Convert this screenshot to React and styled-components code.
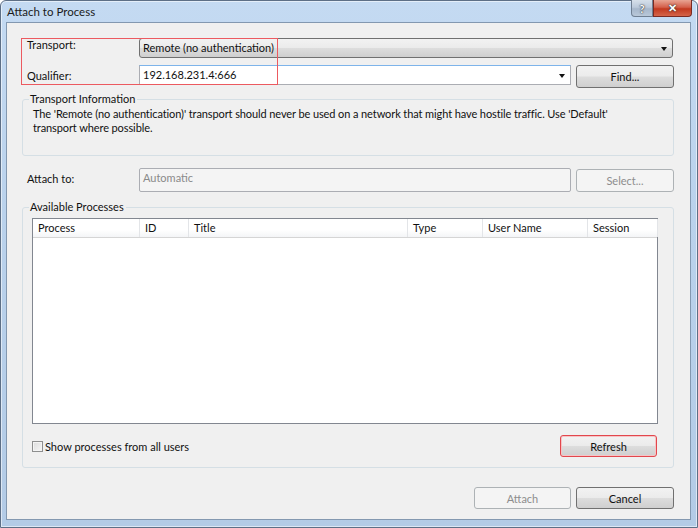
import React from "react";
import styled, { createGlobalStyle, css } from "styled-components";

const GlobalStyle = createGlobalStyle`
  html, body { margin: 0; padding: 0; background: #fff; }
  body { font-family: "Lato", "Noto Sans", sans-serif; font-size: 11px; color: #111; }
  * { box-sizing: border-box; }
`;

const columns = [
  { name: "Process", width: 107 },
  { name: "ID", width: 49 },
  { name: "Title", width: 219 },
  { name: "Type", width: 75 },
  { name: "User Name", width: 105 },
  { name: "Session", width: 70 },
];

const Window = styled.div`
  width: 698px;
  height: 528px;
  display: flex;
  flex-direction: column;
  padding: 0 6px 7px 5px;
  border: 1px solid #5d6f86;
  border-radius: 6px 6px 0 0;
  background: linear-gradient(180deg, #c4daf2 0%, #bad2ec 40%, #b3cbe6 100%);
  box-shadow: inset 0 0 0 1px rgba(255, 255, 255, 0.55);
`;

const TitleBar = styled.div`
  height: 21px;
  display: flex;
  align-items: flex-start;
  margin-right: -1px;
`;

const Title = styled.div`
  padding: 4px 0 0 1px;
  font-size: 11.5px;
  color: #1a1a1a;
`;

const CaptionButtons = styled.div`
  margin-left: auto;
  display: flex;
  margin-top: -1px;
`;

const CaptionButton = styled.div`
  height: 17px;
  width: ${(p) => (p.$close ? "39px" : "22px")};
  display: flex;
  align-items: center;
  justify-content: center;
  border: 1px solid ${(p) => (p.$close ? "#7a2a22" : "#6f7f92")};
  border-top: none;
  color: #fff;
  font-weight: bold;
  font-size: 11px;
  background: ${(p) =>
    p.$close
      ? "linear-gradient(180deg, #e8a493 0%, #d4604b 45%, #c2391f 55%, #d4654a 100%)"
      : "linear-gradient(180deg, #d6e0ea 0%, #bccadb 45%, #a6b7cb 55%, #b9c8d9 100%)"};
  border-radius: ${(p) => (p.$close ? "0 0 4px 0" : "0 0 0 4px")};
  text-shadow: 0 0 1px #222, 0 0 2px #333;
`;

const Client = styled.div`
  position: relative;
  flex: 1;
  background: #f0f0f0;
  border: 1px solid #8398b0;
  padding: 15px 16px 0 15px;
  display: flex;
  flex-direction: column;
`;

const Annotation = styled.div`
  position: absolute;
  z-index: 2;
  left: 14px;
  top: 15px;
  width: 257px;
  height: 47px;
  border: 1px solid #ec5a60;
  pointer-events: none;
`;

const FormGrid = styled.div`
  display: grid;
  grid-template-columns: 112px 432px 98px;
  column-gap: 5px;
  align-items: start;
  margin-top: ${(p) => p.$top || 0}px;
`;

const Label = styled.div`
  padding-left: 5px;
  line-height: ${(p) => p.$h || 20}px;
  margin-top: ${(p) => p.$mt || 0}px;
`;

const arrow = css`
  &::after {
    content: "";
    position: absolute;
    right: 5px;
    top: 50%;
    margin-top: -1px;
    border-left: 3px solid transparent;
    border-right: 3px solid transparent;
    border-top: 4px solid #111;
  }
`;

const DropDown = styled.div`
  position: relative;
  grid-column: 2 / 4;
  height: 20px;
  margin-right: 1px;
  border: 1px solid #707070;
  border-radius: 3px;
  background: linear-gradient(180deg, #f2f2f2 0%, #ebebeb 49%, #dddddd 51%, #cfcfcf 100%);
  padding-left: 3px;
  line-height: 18px;
  ${arrow}
`;

const ComboEdit = styled.div`
  position: relative;
  height: 20px;
  border: 1px solid #abadb3;
  border-top-color: #7eb4ea;
  background: #fff;
  padding-left: 3px;
  line-height: 18px;
  ${arrow}
`;

const TextBox = styled.div`
  height: 24px;
  border: 1px solid #abadb3;
  border-radius: 2px;
  background: #f4f4f4;
  color: #8a8a8a;
  padding: 2px 3px;
`;

const Button = styled.div`
  height: ${(p) => p.$h || 22}px;
  width: ${(p) => (p.$w ? `${p.$w}px` : "auto")};
  margin-top: ${(p) => p.$mt || 0}px;
  margin-left: ${(p) => (p.$push ? "auto" : "0")};
  display: flex;
  align-items: center;
  justify-content: center;
  border: 1px solid ${(p) => (p.$disabled ? "#adb2b5" : p.$highlight ? "#e2474d" : "#707070")};
  border-radius: 3px;
  color: ${(p) => (p.$disabled ? "#8d8d8d" : "#111")};
  background: ${(p) =>
    p.$disabled
      ? "#f4f4f4"
      : "linear-gradient(180deg, #f2f2f2 0%, #ebebeb 49%, #dddddd 51%, #cfcfcf 100%)"};
  ${(p) => p.$highlight && "box-shadow: inset 0 0 0 1px #f6c4c6;"}
`;

const Group = styled.fieldset`
  margin: ${(p) => p.$mt || 0}px 0 0 0;
  padding: ${(p) => p.$pad};
  border: 1px solid #d5dfe5;
  border-radius: 3px;
  min-width: 0;
  height: ${(p) => p.$h}px;
`;

const Legend = styled.legend`
  padding: 0 2px 0 1px;
  margin-left: ${(p) => p.$ml}px;
  line-height: 14px;
`;

const InfoText = styled.p`
  margin: 0;
  max-width: 600px;
  line-height: 14px;
  letter-spacing: -0.1px;
`;

const ListView = styled.div`
  height: 206px;
  background: #fff;
  border: 1px solid #828790;
`;

const HeaderRow = styled.div`
  display: flex;
  height: 19px;
  background: linear-gradient(180deg, #ffffff 0%, #ffffff 60%, #f4f5f7 100%);
  border-bottom: 1px solid #d5d5d5;
`;

const HeaderCell = styled.div`
  width: ${(p) => p.$w}px;
  flex: none;
  padding-left: 5px;
  line-height: 18px;
  border-right: 1px solid #e3e5e8;
`;

const CheckRow = styled.div`
  display: flex;
  align-items: center;
  margin-top: 11px;
  padding-right: 1px;
`;

const CheckBox = styled.span`
  width: 11px;
  height: 11px;
  border: 1px solid #8e8f8f;
  background: linear-gradient(135deg, #dcdcdc 0%, #f6f6f6 100%);
  box-shadow: inset 0 0 0 1px #f4f4f4;
  margin-right: 2px;
`;

const Footer = styled.div`
  display: flex;
  justify-content: flex-end;
  gap: 5px;
  margin-top: 19px;
`;

const App = () => {
  return (
    <>
      <GlobalStyle />
      <Window>
        <TitleBar>
          <Title>Attach to Process</Title>
          <CaptionButtons>
            <CaptionButton>?</CaptionButton>
            <CaptionButton $close>✕</CaptionButton>
          </CaptionButtons>
        </TitleBar>
        <Client>
          <Annotation />
          <FormGrid>
            <Label $mt={-3}>Transport:</Label>
            <DropDown>Remote (no authentication)</DropDown>
          </FormGrid>
          <FormGrid $top={7}>
            <Label $mt={1}>Qualifier:</Label>
            <ComboEdit>192.168.231.4:666</ComboEdit>
            <Button $h={23}>Find...</Button>
          </FormGrid>

          <Group $mt={4} $h={64} $pad="1px 10px 0 10px">
            <Legend $ml={-4}>Transport Information</Legend>
            <InfoText>
              The 'Remote (no authentication)' transport should never be used on a network that might have hostile traffic. Use 'Default'
              transport where possible.
            </InfoText>
          </Group>

          <FormGrid $top={12}>
            <Label $h={22}>Attach to:</Label>
            <TextBox>Automatic</TextBox>
            <Button $disabled $h={23} $mt={1}>Select...</Button>
          </FormGrid>

          <Group $mt={8} $h={268} $pad="4px 15px 0 9px">
            <Legend $ml={-3}>Available Processes</Legend>
            <ListView>
              <HeaderRow>
                {columns.map((c) => (
                  <HeaderCell key={c.name} $w={c.width}>
                    {c.name}
                  </HeaderCell>
                ))}
              </HeaderRow>
            </ListView>
            <CheckRow>
              <CheckBox />
              <span>Show processes from all users</span>
              <Button $highlight $push $w={97}>
                Refresh
              </Button>
            </CheckRow>
          </Group>

          <Footer>
            <Button $disabled $w={97}>Attach</Button>
            <Button $w={98}>Cancel</Button>
          </Footer>
        </Client>
      </Window>
    </>
  );
};

export default App;
